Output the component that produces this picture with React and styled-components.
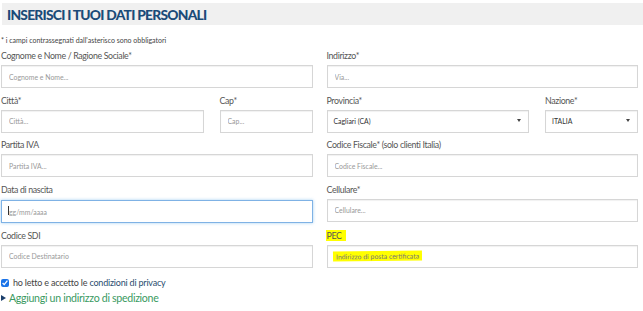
import { styled, createGlobalStyle } from "styled-components";

const GlobalStyle = createGlobalStyle`
  body {
    margin: 0;
    background: #fff;
    font-family: Lato, "Open Sans", "Liberation Sans", sans-serif;
    color: #555;
  }
  * { box-sizing: border-box; }
`;

const Page = styled.div`
  width: 643px;
  padding-top: 3px;
`;

const TitleBar = styled.div`
  margin-left: 2px;
  height: 22px;
  background: #f0f0f0;
  display: flex;
  align-items: center;
  padding-left: 5px;
`;

const Title = styled.h1`
  margin: 0;
  font-size: 13.8px;
  font-weight: 900;
  color: #1b4b78;
  letter-spacing: -0.75px;
`;

const Note = styled.p`
  margin: 10px 0 5px 1px;
  font-size: 7px;
  line-height: 10px;
  color: #444;
`;

const Form = styled.form`
  margin-left: 1px;
  width: 637px;
  display: grid;
  grid-template-columns: 1fr 1fr;
  column-gap: 14px;
  row-gap: 6.5px;
`;

const Split = styled.div`
  display: grid;
  grid-template-columns: 1fr 93px;
  column-gap: 16px;
`;

const Field = styled.div`
  display: flex;
  flex-direction: column;
`;

const Label = styled.label`
  font-size: 8.8px;
  letter-spacing: -0.35px;
  line-height: 12px;
  margin-bottom: 3px;
  color: #555;
  white-space: nowrap;
`;

const Mark = styled.span`
  background: #ffff00;
  padding: 0 4px 0 1px;
  margin-left: -1px;
`;

const Input = styled.input`
  height: 23px;
  width: 100%;
  border: 1px solid ${(p) => (p.$focus ? "#7fb2e5" : "#d6d6d6")};
  box-shadow: ${(p) =>
    p.$focus
      ? "0 0 3px rgba(102, 175, 233, 0.6)"
      : "inset 0 1px 1px rgba(0, 0, 0, 0.06)"};
  padding: 0 7px;
  font-family: inherit;
  font-size: 6.9px;
  color: #555;
  outline: none;
  &::placeholder {
    color: #999;
  }
`;

const FakePlaceholder = styled.div`
  height: 23px;
  border: 1px solid #d6d6d6;
  box-shadow: inset 0 1px 1px rgba(0, 0, 0, 0.06);
  padding: 0 5px;
  display: flex;
  align-items: center;
  font-size: 6.9px;
  color: #777;
  span {
    background: #ffff00;
    padding: 1px 3px;
    transform: rotate(-0.6deg);
  }
`;

const Select = styled.div`
  height: 23px;
  border: 1px solid #d6d6d6;
  box-shadow: inset 0 1px 1px rgba(0, 0, 0, 0.06);
  padding: 0 7px 0 6px;
  display: flex;
  align-items: center;
  justify-content: space-between;
  font-size: 6.9px;
  color: #333;
  &::after {
    content: "";
    border-left: 2px solid transparent;
    border-right: 2px solid transparent;
    border-top: 3px solid #444;
    margin-bottom: 2px;
  }
`;

const Caret = styled.span`
  display: inline-block;
  width: 1px;
  height: 9px;
  background: #333;
`;

const DateBox = styled.div`
  position: relative;
  ${Caret} {
    position: absolute;
    left: 7px;
    top: 7px;
  }
`;

const Privacy = styled.label`
  display: flex;
  align-items: center;
  gap: 4px;
  margin: 9px 0 0 1px;
  font-size: 9px;
  letter-spacing: -0.2px;
  line-height: 12px;
  color: #444;
  white-space: pre;
  input {
    margin: 0;
    width: 8px;
    height: 8px;
    accent-color: #1a73e8;
  }
  a {
    color: #2a4d6e;
    text-decoration: none;
  }
`;

const AddShipping = styled.a`
  display: flex;
  align-items: center;
  gap: 2px;
  margin: 2px 0 0 1px;
  font-size: 10.6px;
  letter-spacing: -0.3px;
  line-height: 15px;
  color: #3a9a5f;
  text-decoration: none;
  &::before {
    content: "";
    border-top: 3px solid transparent;
    border-bottom: 3px solid transparent;
    border-left: 5px solid #1b3f6b;
    margin-right: 1px;
  }
`;

export default function App() {
  return (
    <Page>
      <GlobalStyle />
      <TitleBar>
        <Title>INSERISCI I TUOI DATI PERSONALI</Title>
      </TitleBar>
      <Note>* i campi contrassegnati dall'asterisco sono obbligatori</Note>
      <Form>
        <Field>
          <Label>Cognome e Nome / Ragione Sociale*</Label>
          <Input placeholder="Cognome e Nome..." />
        </Field>
        <Field>
          <Label>Indirizzo*</Label>
          <Input placeholder="Via..." />
        </Field>

        <Split>
          <Field>
            <Label>Città*</Label>
            <Input placeholder="Città..." />
          </Field>
          <Field>
            <Label>Cap*</Label>
            <Input placeholder="Cap..." />
          </Field>
        </Split>
        <Split>
          <Field>
            <Label>Provincia*</Label>
            <Select>Cagliari (CA)</Select>
          </Field>
          <Field>
            <Label>Nazione*</Label>
            <Select>ITALIA</Select>
          </Field>
        </Split>

        <Field>
          <Label>Partita IVA</Label>
          <Input placeholder="Partita IVA..." />
        </Field>
        <Field>
          <Label>Codice Fiscale* (solo clienti Italia)</Label>
          <Input placeholder="Codice Fiscale..." />
        </Field>

        <Field>
          <Label>Data di nascita</Label>
          <DateBox>
            <Input $focus placeholder="gg/mm/aaaa" />
            <Caret />
          </DateBox>
        </Field>
        <Field>
          <Label>Cellulare*</Label>
          <Input placeholder="Cellulare..." />
        </Field>

        <Field>
          <Label>Codice SDI</Label>
          <Input placeholder="Codice Destinatario" />
        </Field>
        <Field>
          <Label>
            <Mark>PEC</Mark>
          </Label>
          <FakePlaceholder>
            <span>Indirizzo di posta certificata</span>
          </FakePlaceholder>
        </Field>
      </Form>
      <Privacy>
        <input type="checkbox" defaultChecked />
        <span>
          ho letto e accetto le <a href="#">condizioni di privacy</a>
        </span>
      </Privacy>
      <AddShipping href="#">Aggiungi un indirizzo di spedizione</AddShipping>
    </Page>
  );
}
